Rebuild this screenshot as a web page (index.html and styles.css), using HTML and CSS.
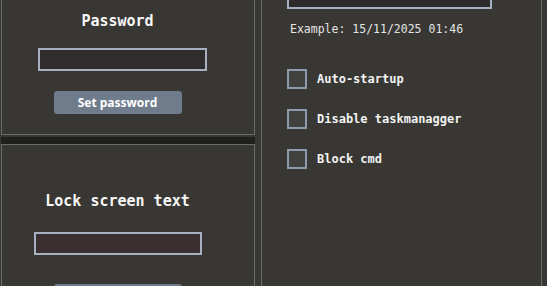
FILE: index.html
```html
<!DOCTYPE html>
<html>
<head>
<meta charset="utf-8">
<link rel="stylesheet" href="styles.css">
</head>
<body>
<div class="app">
  <div class="left">
    <section class="panel panel-top">
      <div class="inner">
        <h2 class="title title-pw">Password</h2>
        <input class="field field-pw" type="password">
        <button class="btn btn-pw">Set password</button>
      </div>
    </section>
    <div class="splitter"></div>
    <section class="panel panel-bottom">
      <div class="inner">
        <h2 class="title title-lock">Lock screen text</h2>
        <input class="field field-lock" type="text">
        <button class="btn btn-lock" aria-label="Set lock screen text"></button>
      </div>
    </section>
  </div>
  <section class="right">
    <input class="field field-date" type="text">
    <p class="example">Example: 15/11/2025 01:46</p>
    <ul class="checks">
      <li class="check"><span class="box"></span><span class="label">Auto-startup</span></li>
      <li class="check"><span class="box"></span><span class="label">Disable taskmanagger</span></li>
      <li class="check"><span class="box"></span><span class="label">Block cmd</span></li>
    </ul>
  </section>
</div>
</body>
</html>
```
FILE: styles.css
```css
html, body {
  margin: 0;
  padding: 0;
  width: 547px;
  height: 286px;
  overflow: hidden;
  background: #383734;
}
.app {
  display: flex;
  align-items: flex-start;
  height: 286px;
  overflow: hidden;
  font-family: "DejaVu Sans Mono", "Liberation Mono", monospace;
  color: #f5f5f5;
}
.left {
  width: 254px;
  margin-left: 1px;
  display: flex;
  flex-direction: column;
}
.panel {
  border: 1px solid #6c6c6a;
  box-sizing: border-box;
}
.panel-top {
  height: 136px;
  margin-top: -1px;
}
.splitter {
  height: 7px;
  margin-top: 2px;
  background: #1f1f1d;
}
.panel-bottom {
  height: 142px;
  border-bottom: 0;
}
.inner {
  width: 231px;
  display: flex;
  flex-direction: column;
  align-items: center;
}
.title {
  margin: 0;
  font-size: 15px;
  font-weight: bold;
  line-height: 18px;
  color: #f7f7f7;
}
.title-pw { margin-top: 12px; }
.title-lock { margin-top: 47px; }
.field {
  display: block;
  box-sizing: border-box;
  height: 23px;
  margin: 0;
  padding: 0;
  border: 2px solid #a6b0c0;
  background: #2f2c2e;
  outline: none;
}
.field-pw {
  width: 169px;
  margin-top: 18px;
  margin-left: 9px;
}
.field-lock {
  width: 168px;
  margin-top: 22px;
  background: #3a3032;
}
.btn {
  box-sizing: border-box;
  width: 128px;
  height: 23px;
  margin-top: 20px;
  padding: 0;
  border: 0;
  border-radius: 3px;
  background: #6f7c8c;
  color: #ffffff;
  font-family: "Open Sans", "Noto Sans", sans-serif;
  font-weight: bold;
  font-size: 12px;
  line-height: 23px;
}
.btn-lock { margin-top: 29px; }
.right {
  width: 281px;
  height: 300px;
  margin-left: 6px;
  box-sizing: border-box;
  border-left: 1px solid #6c6c6a;
  border-right: 1px solid #6c6c6a;
  padding-left: 25px;
}
.field-date {
  width: 205px;
  margin-top: -14px;
  background: #2e2b2d;
}
.example {
  margin: 13px 0 0 3px;
  font-size: 11.5px;
  line-height: 14px;
  color: #e4e4e4;
}
.checks {
  list-style: none;
  margin: 33px 0 0 0;
  padding: 0;
  display: flex;
  flex-direction: column;
  gap: 20px;
}
.check {
  display: flex;
  align-items: center;
  height: 20px;
}
.box {
  box-sizing: border-box;
  width: 20px;
  height: 20px;
  border: 2px solid #8c9aad;
  background: #414140;
}
.label {
  margin-left: 10px;
  font-size: 12px;
  font-weight: bold;
  color: #f2f2f2;
}
```
